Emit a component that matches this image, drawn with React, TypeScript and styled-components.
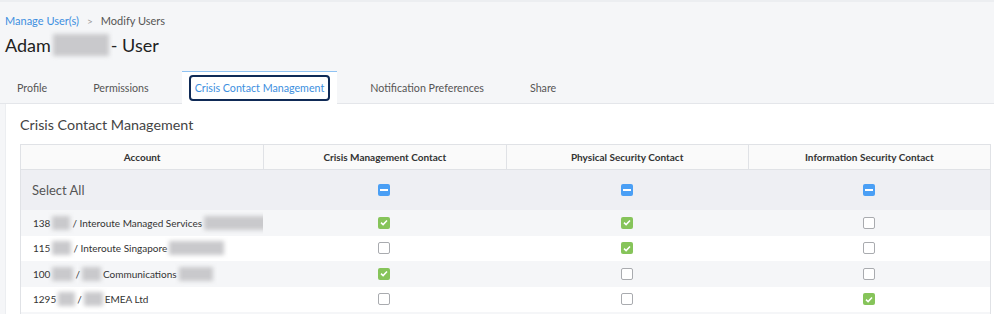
import styled, { createGlobalStyle } from 'styled-components'

const GlobalStyle = createGlobalStyle`
  html, body {
    margin: 0;
    padding: 0;
    background: #f5f6f8;
    font-family: Lato, "Open Sans", "Liberation Sans", sans-serif;
    color: #333;
  }
`

type Part = { text?: string; mask?: number }

type Row = {
  parts: Part[]
  checks: [boolean, boolean, boolean]
}

const rows: Row[] = [
  {
    parts: [{ text: '138' }, { mask: 18 }, { text: '/ Interoute Managed Services' }, { mask: 68 }],
    checks: [true, true, false]
  },
  {
    parts: [{ text: '115' }, { mask: 19 }, { text: '/ Interoute Singapore' }, { mask: 55 }],
    checks: [false, true, false]
  },
  {
    parts: [{ text: '100' }, { mask: 21 }, { text: '/' }, { mask: 19 }, { text: 'Communications' }, { mask: 34 }],
    checks: [true, false, false]
  },
  {
    parts: [{ text: '1295' }, { mask: 17 }, { text: '/' }, { mask: 19 }, { text: 'EMEA Ltd' }],
    checks: [false, false, true]
  }
]

const tabs = ['Profile', 'Permissions', 'Crisis Contact Management', 'Notification Preferences', 'Share']
const columns = ['Account', 'Crisis Management Contact', 'Physical Security Contact', 'Information Security Contact']

export default function App() {
  return (
    <Page>
      <GlobalStyle />
      <TopLine />
      <Header>
        <Breadcrumb>
          <a>Manage User(s)</a>
          <span className='sep'>&gt;</span>
          <span>Modify Users</span>
        </Breadcrumb>
        <Title>
          Adam <Blur $w={56} $h={22} /> - User
        </Title>
      </Header>

      <TabBar>
        {tabs.map((t, i) => (
          <Tab key={t} $active={i === 2}>
            <span>{t}</span>
          </Tab>
        ))}
      </TabBar>

      <Panel>
        <Heading>Crisis Contact Management</Heading>
        <Table>
          <HeadRow>
            {columns.map(c => (
              <HeadCell key={c}>{c}</HeadCell>
            ))}
          </HeadRow>
          <SelectRow>
            <AccountCell $large>Select All</AccountCell>
            {[0, 1, 2].map(i => (
              <BoxCell key={i}>
                <Check $state='partial' />
              </BoxCell>
            ))}
          </SelectRow>
          {rows.map((r, idx) => (
            <DataRow key={idx} $striped={idx % 2 === 0}>
              <AccountCell>
                {r.parts.map((p, k) =>
                  p.mask ? <Blur key={k} $w={p.mask} $h={14} /> : <Label key={k}>{p.text}</Label>
                )}
              </AccountCell>
              {r.checks.map((c, i) => (
                <BoxCell key={i}>
                  <Check $state={c ? 'on' : 'off'} />
                </BoxCell>
              ))}
            </DataRow>
          ))}
          <DataRow $striped />
        </Table>
      </Panel>
    </Page>
  )
}

const Check = ({ $state }: { $state: 'on' | 'off' | 'partial' }) => (
  <Box $state={$state}>
    {$state === 'on' && (
      <svg width='8' height='7' viewBox='0 0 8 7'>
        <path d='M1 3.6 L3.1 5.6 L7 1.4' fill='none' stroke='#fff' strokeWidth='1.5' />
      </svg>
    )}
    {$state === 'partial' && <Dash />}
  </Box>
)

const Page = styled.div`
  width: 994px;
  height: 314px;
  overflow: hidden;
`

const TopLine = styled.div`
  height: 2px;
  background: #eceef1;
`

const Header = styled.div`
  padding: 12px 5px 0;
`

const Breadcrumb = styled.div`
  display: flex;
  align-items: center;
  gap: 8px;
  font-size: 11px;
  color: #555;
  a {
    color: #3d8fe0;
  }
  .sep {
    color: #999;
    font-size: 10px;
  }
`

const Title = styled.h1`
  margin: 5px 0 0;
  font-size: 18px;
  font-weight: 400;
  color: #222;
  display: flex;
  align-items: center;
  gap: 2px;
  height: 26px;
`

const Blur = styled.span<{ $w: number; $h: number }>`
  display: inline-block;
  flex: none;
  width: ${p => p.$w}px;
  height: ${p => p.$h}px;
  background: #c9c9cc;
  filter: blur(2px);
  vertical-align: middle;
`

const Label = styled.span`
  padding: 0 2px;
`

const TabBar = styled.div`
  display: flex;
  align-items: stretch;
  gap: 20px;
  margin-top: 13px;
  padding-left: 4px;
  height: 32px;
  border-bottom: 1px solid #e4e6ea;
`

const Tab = styled.div<{ $active?: boolean }>`
  display: flex;
  align-items: center;
  padding: 0 ${p => (p.$active ? 7 : 13)}px;
  font-size: 10.7px;
  color: ${p => (p.$active ? '#3d8fe0' : '#555')};
  background: ${p => (p.$active ? '#fff' : 'transparent')};
  border-top: 1px solid ${p => (p.$active ? '#8fc2f2' : 'transparent')};
  margin-bottom: -1px;
  span {
    padding: ${p => (p.$active ? '3px 4px' : '0')};
    border: ${p => (p.$active ? '2px solid #0f2a56' : 'none')};
    border-radius: 4px;
    line-height: 16px;
  }
`

const Panel = styled.div`
  background: #fff;
  margin-left: 5px;
  border-left: 1px solid #eceef1;
  padding: 12px 3px 0 14px;
  height: 220px;
`

const Heading = styled.h2`
  margin: 0 0 10px;
  font-size: 14.3px;
  line-height: 18px;
  font-weight: 400;
  color: #444;
`

const Table = styled.div`
  border: 1px solid #e0e2e6;
  border-bottom: none;
`

const grid = `
  display: grid;
  grid-template-columns: repeat(4, minmax(0, 1fr));
`

const HeadRow = styled.div`
  ${grid}
  height: 24px;
  background: #fafafa;
  border-bottom: 1px solid #e0e2e6;
`

const HeadCell = styled.div`
  display: flex;
  align-items: center;
  justify-content: center;
  font-size: 10px;
  font-weight: 700;
  color: #333;
  & + & {
    border-left: 1px solid #e0e2e6;
  }
`

const SelectRow = styled.div`
  ${grid}
  height: 40px;
  background: #eeeff3;
`

const DataRow = styled.div<{ $striped?: boolean }>`
  ${grid}
  height: 25.5px;
  background: ${p => (p.$striped ? '#f5f6f8' : '#fff')};
`

const AccountCell = styled.div<{ $large?: boolean }>`
  display: flex;
  align-items: center;
  padding-left: ${p => (p.$large ? 11 : 10)}px;
  font-size: ${p => (p.$large ? 13 : 10)}px;
  color: ${p => (p.$large ? '#555' : '#333')};
  white-space: nowrap;
  overflow: hidden;
`

const BoxCell = styled.div`
  display: flex;
  align-items: center;
  justify-content: center;
`

const Box = styled.span<{ $state: 'on' | 'off' | 'partial' }>`
  box-sizing: border-box;
  width: 12px;
  height: 12px;
  border-radius: 2px;
  display: flex;
  align-items: center;
  justify-content: center;
  background: ${p => (p.$state === 'on' ? '#86c45a' : p.$state === 'partial' ? '#4a9ff5' : '#fff')};
  border: ${p => (p.$state === 'off' ? '1px solid #a9abaf' : 'none')};
`

const Dash = styled.span`
  width: 8px;
  height: 2px;
  background: #fff;
`
